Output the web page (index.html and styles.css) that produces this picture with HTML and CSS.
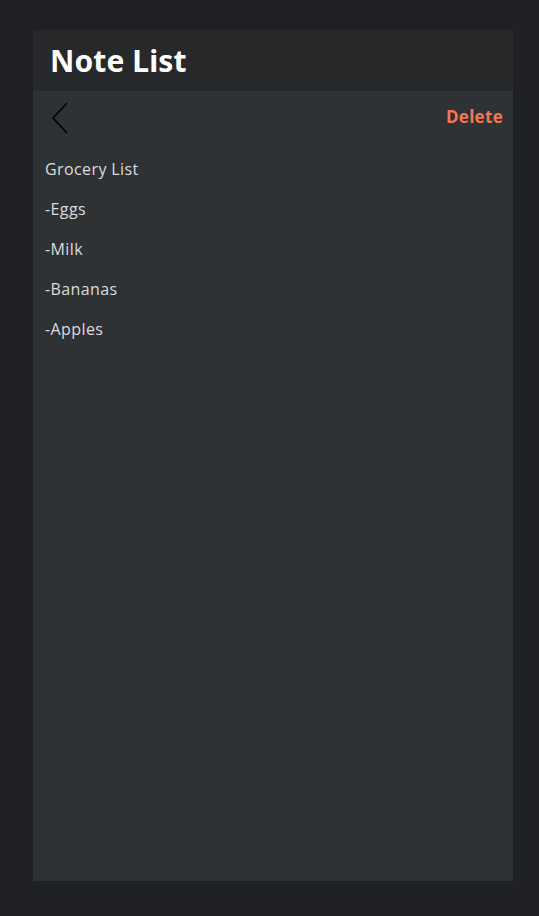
FILE: index.html
```html
<!DOCTYPE html>
<html>
<head>
<meta charset="utf-8">
<link rel="stylesheet" href="styles.css">
</head>
<body>
<div class="app">
  <header class="header"><h1 class="title">Note List</h1></header>
  <main class="note">
    <div class="toolbar">
      <svg class="back" width="18" height="32" viewBox="0 0 18 32"><polyline points="16,1 2,16 16,31" fill="none" stroke="#000" stroke-width="1.6"/></svg>
      <span class="delete">Delete</span>
    </div>
    <div class="lines">
      <p class="line">Grocery List</p>
      <p class="line">-Eggs</p>
      <p class="line">-Milk</p>
      <p class="line">-Bananas</p>
      <p class="line">-Apples</p>
    </div>
  </main>
</div>
</body>
</html>
```

FILE: styles.css
```css
html, body { margin: 0; padding: 0; }
body {
  background: #202125;
  font-family: "Open Sans", "Noto Sans", sans-serif;
  width: 539px;
  height: 916px;
  overflow: hidden;
}
.app {
  margin: 30px 0 0 33px;
  width: 480px;
  height: 851px;
  background: #2f3235;
  display: flex;
  flex-direction: column;
}
.header {
  height: 61px;
  background: #272829;
  display: flex;
  align-items: center;
  padding-left: 17px;
}
.title {
  margin: 0;
  color: #fff;
  font-family: "Noto Sans", sans-serif;
  font-weight: 700;
  font-size: 30px;
  letter-spacing: 0.1px;
}
.toolbar {
  display: flex;
  justify-content: space-between;
  align-items: center;
  padding: 10px 10px 0 18px;
  height: 32px;
}
.back { display: block; margin-top: 2px; }
.delete {
  color: #f47650;
  font-weight: 700;
  font-size: 17px;
  letter-spacing: 0.3px;
  margin-top: -2px;
}
.lines {
  padding: 25px 0 0 12px;
  display: flex;
  flex-direction: column;
  gap: 18px;
}
.line {
  margin: 0;
  color: #dcdcdc;
  font-size: 16px;
  letter-spacing: 0.4px;
  line-height: 22px;
  font-weight: 500;
}
```
